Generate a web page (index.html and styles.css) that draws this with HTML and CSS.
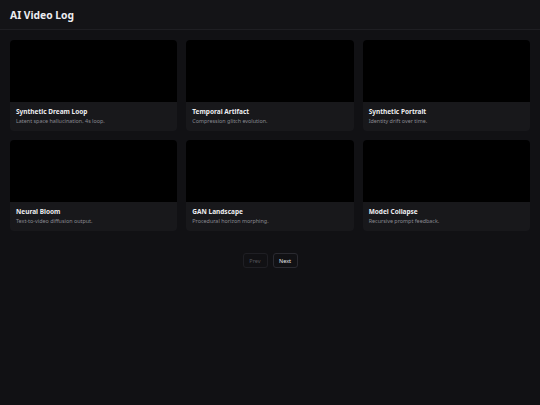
FILE: index.html
```html
<!DOCTYPE html>
<html>
<head>
<meta charset="utf-8">
<link rel="stylesheet" href="styles.css">
</head>
<body>
<header class="topbar"><h1 class="title">AI Video Log</h1></header>
<main class="content">
  <div class="grid">
    <div class="card"><div class="video"></div><div class="info"><div class="name">Synthetic Dream Loop</div><div class="desc">Latent space hallucination, 4s loop.</div></div></div>
    <div class="card"><div class="video"></div><div class="info"><div class="name">Temporal Artifact</div><div class="desc">Compression glitch evolution.</div></div></div>
    <div class="card"><div class="video"></div><div class="info"><div class="name">Synthetic Portrait</div><div class="desc">Identity drift over time.</div></div></div>
    <div class="card"><div class="video"></div><div class="info"><div class="name">Neural Bloom</div><div class="desc">Text-to-video diffusion output.</div></div></div>
    <div class="card"><div class="video"></div><div class="info"><div class="name">GAN Landscape</div><div class="desc">Procedural horizon morphing.</div></div></div>
    <div class="card"><div class="video"></div><div class="info"><div class="name">Model Collapse</div><div class="desc">Recursive prompt feedback.</div></div></div>
  </div>
  <nav class="pager">
    <button class="btn disabled">Prev</button>
    <button class="btn">Next</button>
  </nav>
</main>
</body>
</html>
```
FILE: styles.css
```css
html, body { margin: 0; padding: 0; }
body {
  background: #111114;
  font-family: "Noto Sans", "Open Sans", sans-serif;
  color: #e8e8ec;
  width: 540px;
  height: 405px;
}
.topbar {
  height: 29px;
  background: #141417;
  border-bottom: 1px solid #1f1f23;
  display: flex;
  align-items: center;
  padding: 0 10px;
}
.title {
  margin: 0;
  font-size: 10.3px;
  font-weight: 700;
  color: #ececf0;
}
.content {
  padding: 10px;
}
.grid {
  display: grid;
  grid-template-columns: repeat(3, 1fr);
  gap: 9px;
}
.card {
  background: #18181b;
  border-radius: 4px;
  overflow: hidden;
  height: 91px;
  display: flex;
  flex-direction: column;
}
.video {
  background: #000;
  height: 63px;
}
.info {
  padding: 5px 6px;
}
.name {
  font-size: 6.5px;
  font-weight: 700;
  color: #ededf0;
  line-height: 9px;
}
.desc {
  font-size: 5.4px;
  color: #8a8a92;
  line-height: 10px;
}
.pager {
  display: flex;
  justify-content: center;
  gap: 5px;
  margin-top: 22px;
}
.btn {
  font-family: "Noto Sans", "Open Sans", sans-serif;
  font-size: 5.5px;
  background: transparent;
  color: #e8e8ec;
  border: 1px solid #2a2a30;
  border-radius: 3px;
  width: 25px;
  height: 15px;
  padding: 0;
}
.btn.disabled { color: #55555c; border-color: #1f1f24; }
```
